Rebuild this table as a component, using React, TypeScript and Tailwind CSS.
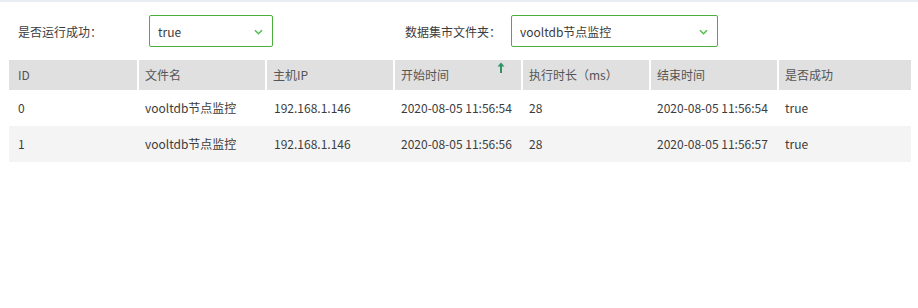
const rows = [
  { id: "0", file: "vooltdb节点监控", ip: "192.168.1.146", start: "2020-08-05 11:56:54", cost: "28", end: "2020-08-05 11:56:54", ok: "true" },
  { id: "1", file: "vooltdb节点监控", ip: "192.168.1.146", start: "2020-08-05 11:56:56", cost: "28", end: "2020-08-05 11:56:57", ok: "true" },
];

const cols = "grid grid-cols-[128px_126px_126px_126px_126px_126px_132px] gap-x-[2px]";

const Select = ({ value, className }: { value: string; className: string }) => (
  <div
    className={`flex h-[32px] items-center justify-between rounded-[2px] border border-[#4cae3c] pl-[8px] pr-[9px] text-[12px] ${className}`}
  >
    <span className="pt-[2px]">{value}</span>
    <svg width="9" height="6" viewBox="0 0 9 6" className="mt-[2px]">
      <path d="M1 1.2l3.5 3.5L8 1.2" fill="none" stroke="#52c152" strokeWidth="1.6" />
    </svg>
  </div>
);

export default function App() {
  return (
    <div
      className="h-[308px] w-[918px] bg-white text-[12px] text-[#3c3c3c]"
      style={{ fontFamily: '"Noto Sans CJK SC", "Noto Sans", sans-serif' }}
    >
      <div className="h-[2px] bg-[#e9eef4]" />
      <div className="flex items-center pt-[13px] pl-[18px]">
        <span className="w-[131px] pt-[1px]">是否运行成功：</span>
        <Select value="true" className="w-[124px]" />
        <span className="ml-[132px] w-[106px] pt-[1px]">数据集市文件夹：</span>
        <Select value="vooltdb节点监控" className="w-[207px]" />
      </div>
      <div className="ml-[9px] mt-[13px] w-[902px]">
        <div className={`${cols} h-[30px] text-[#555]`}>
          <div className="flex items-center bg-[#e0e0e0] pl-[9px]">ID</div>
          <div className="flex items-center bg-[#e0e0e0] pl-[6px]">文件名</div>
          <div className="flex items-center bg-[#e0e0e0] pl-[6px]">主机IP</div>
          <div className="relative flex items-center bg-[#e0e0e0] pl-[6px]">
            开始时间
            <svg className="absolute left-[102px] top-[2px]" width="8" height="11" viewBox="0 0 8 11">
              <path d="M4 0.5L7.5 4.5H0.5Z" fill="#2e9466" />
              <rect x="3" y="4" width="2" height="7" fill="#2e9466" />
            </svg>
          </div>
          <div className="flex items-center bg-[#e0e0e0] pl-[6px]">执行时长（ms）</div>
          <div className="flex items-center bg-[#e0e0e0] pl-[6px]">结束时间</div>
          <div className="flex items-center bg-[#e0e0e0] pl-[6px]">是否成功</div>
        </div>
        {rows.map((r, i) => (
          <div key={r.id} className={`${cols} h-[36px] ${i % 2 === 1 ? "bg-[#f4f4f4]" : "bg-white"}`}>
            <div className="flex items-center pl-[9px]">{r.id}</div>
            <div className="flex items-center pl-[6px]">{r.file}</div>
            <div className="flex items-center pl-[7px]">{r.ip}</div>
            <div className="flex items-center pl-[6px]">{r.start}</div>
            <div className="flex items-center pl-[6px]">{r.cost}</div>
            <div className="flex items-center pl-[6px]">{r.end}</div>
            <div className="flex items-center pl-[6px]">{r.ok}</div>
          </div>
        ))}
      </div>
    </div>
  );
}
